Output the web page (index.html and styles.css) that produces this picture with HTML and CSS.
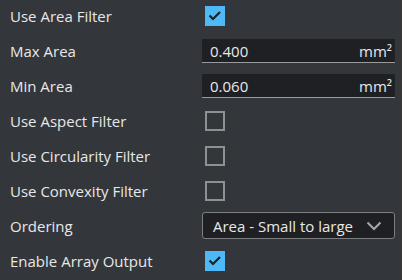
FILE: index.html
```html
<!DOCTYPE html>
<html>
<head>
    <title>Blob Filter Settings</title>
    <link rel="stylesheet" href="styles.css">
</head>
<body>
    <div class="settings">
        <div class="row">
            <div class="label">Use Area Filter</div>
            <div class="control">
                <span class="checkbox checked">
                    <svg width="20" height="20" viewBox="0 0 20 20"><path d="M4.5 9.5L8 13L15 6" fill="none" stroke="#1f2024" stroke-width="2.2"/></svg>
                </span>
            </div>
        </div>
        <div class="row">
            <div class="label">Max Area</div>
            <div class="control">
                <div class="number-input"><span class="value">0.400</span><span class="unit">mm²</span></div>
            </div>
        </div>
        <div class="row">
            <div class="label">Min Area</div>
            <div class="control">
                <div class="number-input"><span class="value">0.060</span><span class="unit">mm²</span></div>
            </div>
        </div>
        <div class="row">
            <div class="label">Use Aspect Filter</div>
            <div class="control"><span class="checkbox"></span></div>
        </div>
        <div class="row">
            <div class="label">Use Circularity Filter</div>
            <div class="control"><span class="checkbox"></span></div>
        </div>
        <div class="row">
            <div class="label">Use Convexity Filter</div>
            <div class="control"><span class="checkbox"></span></div>
        </div>
        <div class="row">
            <div class="label">Ordering</div>
            <div class="control">
                <div class="select">
                    <span>Area - Small to large</span>
                    <svg width="16" height="10" viewBox="0 0 16 10"><path d="M1.5 1.5L8 8L14.5 1.5" fill="none" stroke="#a5a6a8" stroke-width="2"/></svg>
                </div>
            </div>
        </div>
        <div class="row">
            <div class="label">Enable Array Output</div>
            <div class="control">
                <span class="checkbox checked">
                    <svg width="20" height="20" viewBox="0 0 20 20"><path d="M4.5 9.5L8 13L15 6" fill="none" stroke="#1f2024" stroke-width="2.2"/></svg>
                </span>
            </div>
        </div>
    </div>
</body>
</html>
```

FILE: styles.css
```css
body {
    margin: 0;
    padding: 0;
    background-color: #33363b;
    color: #e8e8e8;
    font-family: 'Open Sans', 'Noto Sans', sans-serif;
    font-size: 15px;
}
.settings {
    display: flex;
    flex-direction: column;
    padding: 0 7px 0 10px;
    margin-top: -2px;
}
.row {
    display: flex;
    align-items: center;
    height: 35px;
}
.label {
    width: 192px;
    flex-shrink: 0;
}
.control {
    flex: 1;
    display: flex;
    align-items: center;
}
.checkbox {
    width: 20px;
    height: 20px;
    margin-left: 3px;
    box-sizing: border-box;
    border: 2px solid #8f9092;
    display: flex;
}
.checkbox.checked {
    border: none;
    background-color: #4fb8f6;
}
.number-input {
    flex: 1;
    height: 24px;
    box-sizing: border-box;
    background-color: #1f2024;
    border-bottom: 1px solid #9a9b9d;
    display: flex;
    align-items: center;
    justify-content: space-between;
    padding: 2px 3px 0 8px;
}
.select {
    flex: 1;
    height: 27px;
    box-sizing: border-box;
    background-color: #1f2024;
    border: 1px solid #7d7e80;
    border-radius: 3px;
    display: flex;
    align-items: center;
    justify-content: space-between;
    padding: 0 12px 0 10px;
}
```
